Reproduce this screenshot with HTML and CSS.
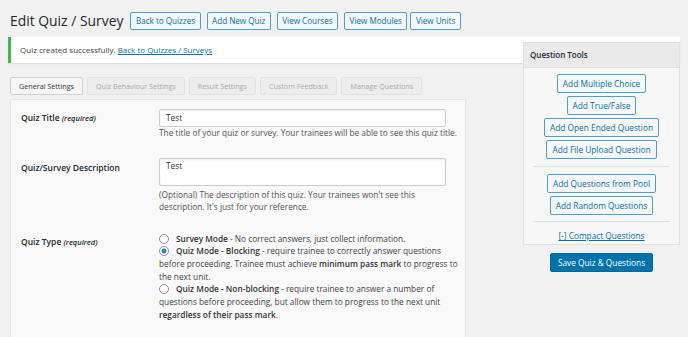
FILE: index.html
```html
<!DOCTYPE html>
<html>
<head>
<meta charset="utf-8">
<link rel="stylesheet" href="styles.css">
</head>
<body>
<div class="wrap">
  <div class="header">
    <h1 class="title">Edit Quiz / Survey</h1>
    <a class="btn">Back to Quizzes</a>
    <a class="btn">Add New Quiz</a>
    <a class="btn">View Courses</a>
    <a class="btn">View Modules</a>
    <a class="btn tight">View Units</a>
  </div>
  <div class="layout">
    <div class="notice">Quiz created successfully. <a class="link">Back to Quizzes / Surveys</a></div>
    <div class="tabs">
      <span class="tab active">General Settings</span>
      <span class="tab">Quiz Behaviour Settings</span>
      <span class="tab">Result Settings</span>
      <span class="tab">Custom Feedback</span>
      <span class="tab">Manage Questions</span>
    </div>
    <div class="panel">
      <div class="row r1">
        <div class="label">Quiz Title <em>(required)</em></div>
        <div class="field">
          <div class="input">Test</div>
          <div class="desc">The title of your quiz or survey. Your trainees will be able to see this quiz title.</div>
        </div>
      </div>
      <div class="row r2">
        <div class="label">Quiz/Survey Description</div>
        <div class="field">
          <div class="textarea">Test</div>
          <div class="desc">(Optional) The description of this quiz. Your trainees won't see this description. It's just for your reference.</div>
        </div>
      </div>
      <div class="row r3">
        <div class="label">Quiz Type <em>(required)</em></div>
        <div class="field options">
          <div class="opt"><span class="radio"></span><b>Survey Mode</b> - No correct answers, just collect information.</div>
          <div class="opt"><span class="radio on"></span><b>Quiz Mode - Blocking</b> - require trainee to correctly answer questions before proceeding. Trainee must achieve <b>minimum pass mark</b> to progress to the next unit.</div>
          <div class="opt"><span class="radio"></span><b>Quiz Mode - Non-blocking</b> - require trainee to answer a number of questions before proceeding, but allow them to progress to the next unit <b>regardless of their pass mark</b>.</div>
        </div>
      </div>
    </div>
    <div class="side">
      <div class="box">
        <div class="box-head">Question Tools</div>
        <div class="box-body">
          <a class="btn">Add Multiple Choice</a>
          <a class="btn">Add True/False</a>
          <a class="btn">Add Open Ended Question</a>
          <a class="btn">Add File Upload Question</a>
          <div class="sep"></div>
          <a class="btn">Add Questions from Pool</a>
          <a class="btn">Add Random Questions</a>
          <div class="sep sep2"></div>
          <a class="link compact">[-] Compact Questions</a>
        </div>
      </div>
      <a class="primary">Save Quiz &amp; Questions</a>
    </div>
  </div>
</div>
</body>
</html>
```
FILE: styles.css
```css
* { box-sizing: border-box; }
html, body { margin: 0; padding: 0; }
body {
  background: #f1f1f1;
  font-family: "Open Sans", "Noto Sans", sans-serif;
  font-size: 8px;
  color: #444;
  width: 688px;
  height: 337px;
  overflow: hidden;
}
.wrap { padding: 0 8px 0 8px; }
.header {
  display: flex;
  align-items: center;
  gap: 6px;
  height: 37px;
  padding: 4px 0 0 2px;
}
.title {
  margin: 0 1px 0 0;
  font-size: 13.9px;
  font-weight: 400;
  color: #23282d;
}
.btn {
  display: inline-block;
  border: 1px solid #4c9fcd;
  border-radius: 2px;
  background: #f7f7f7;
  color: #0073aa;
  height: 18px;
  line-height: 16px;
  padding: 0 5px;
  font-size: 8.1px;
  white-space: nowrap;
}
.header .btn { padding: 0 4.5px; }
.btn.tight { margin-left: -3px; }
.layout {
  display: grid;
  grid-template-columns: 515px 157px;
  grid-template-rows: auto auto 1fr;
}
.notice {
  grid-column: 1 / 3;
  grid-row: 1;
  background: #fff;
  border-left: 3px solid #46b450;
  box-shadow: 0 1px 1px rgba(0,0,0,0.08);
  height: 26px;
  line-height: 26px;
  padding-left: 9px;
  color: #444;
}
.link { color: #0073aa; text-decoration: underline; }
.tabs {
  grid-column: 1;
  grid-row: 2;
  display: flex;
  gap: 4px;
  margin: 14px 0 4px 2px;
}
.tab {
  height: 18px;
  line-height: 16px;
  border: 1px solid #e2e2e2;
  background: #ededed;
  color: #a8a8a8;
  padding: 0 8px;
  border-radius: 2px;
  font-size: 7.2px;
  white-space: nowrap;
}
.tab.active {
  background: #f6f6f6;
  border-color: #cfcfcf;
  color: #333;
}
.panel {
  grid-column: 1;
  grid-row: 3;
  width: 456px;
  margin-left: 2px;
  background: #f9f9f9;
  border: 1px solid #e5e5e5;
  padding: 9px 8px 10px 10px;
  height: 240px;
  font-size: 8.3px;
}
.row {
  display: grid;
  grid-template-columns: 138px 300px;
  line-height: 12.5px;
}
.label {
  font-weight: 600;
  color: #23282d;
  font-size: 8.5px;
  padding-top: 3px;
}
.label em { font-size: 7.5px; font-style: italic; }
.r2 { margin-top: 18px; }
.r2 .label { padding-top: 4px; }
.r3 { margin-top: 19px; line-height: 12.7px; }
.r3 .label { padding-top: 3px; }
.input, .textarea {
  width: 287px;
  background: #fff;
  border: 1px solid #ccc;
  border-radius: 2px;
  box-shadow: inset 0 1px 2px rgba(0,0,0,0.07);
  color: #333;
  padding: 0 6px;
}
.input { height: 18px; line-height: 16px; }
.textarea { height: 28px; line-height: 12px; padding-top: 1px; }
.desc { margin-top: 0; color: #555; }
.r2 .desc { margin-top: 3px; }
.opt b { font-weight: 600; color: #333; }
.radio {
  display: inline-block;
  width: 10px;
  height: 10px;
  border: 1px solid #8c8f94;
  border-radius: 50%;
  background: #fff;
  vertical-align: -2px;
  margin-right: 7px;
}
.radio.on {
  background: radial-gradient(circle, #1e8cbe 0 2.2px, #fff 2.8px);
}
.side {
  grid-column: 2;
  grid-row: 1 / 4;
  margin-top: 5px;
  display: flex;
  flex-direction: column;
  align-items: center;
}
.box {
  width: 157px;
  background: #f7f7f7;
  border: 1px solid #e0e0e0;
}
.box-head {
  background: #eaeaea;
  height: 25px;
  line-height: 24px;
  padding-left: 6px;
  font-weight: 600;
  color: #23282d;
  border-bottom: 1px solid #e0e0e0;
}
.box-body {
  display: flex;
  flex-direction: column;
  align-items: center;
  gap: 3px;
  padding: 6px 9px 0 9px;
}
.box-body .btn { height: 19px; line-height: 17px; font-size: 8.3px; }
.sep { align-self: stretch; border-top: 1px solid #e0e0e0; margin: 4px 0; }
.sep2 { margin: 3px 0 2px; }
.compact { padding: 3px 0 2px; line-height: 12px; font-size: 8.3px; }
.primary {
  margin-top: 8px;
  background: #0073aa;
  border: 1px solid #006799;
  color: #fff;
  border-radius: 2px;
  height: 19px;
  line-height: 17px;
  padding: 0 7px;
  font-size: 8.3px;
}
```
